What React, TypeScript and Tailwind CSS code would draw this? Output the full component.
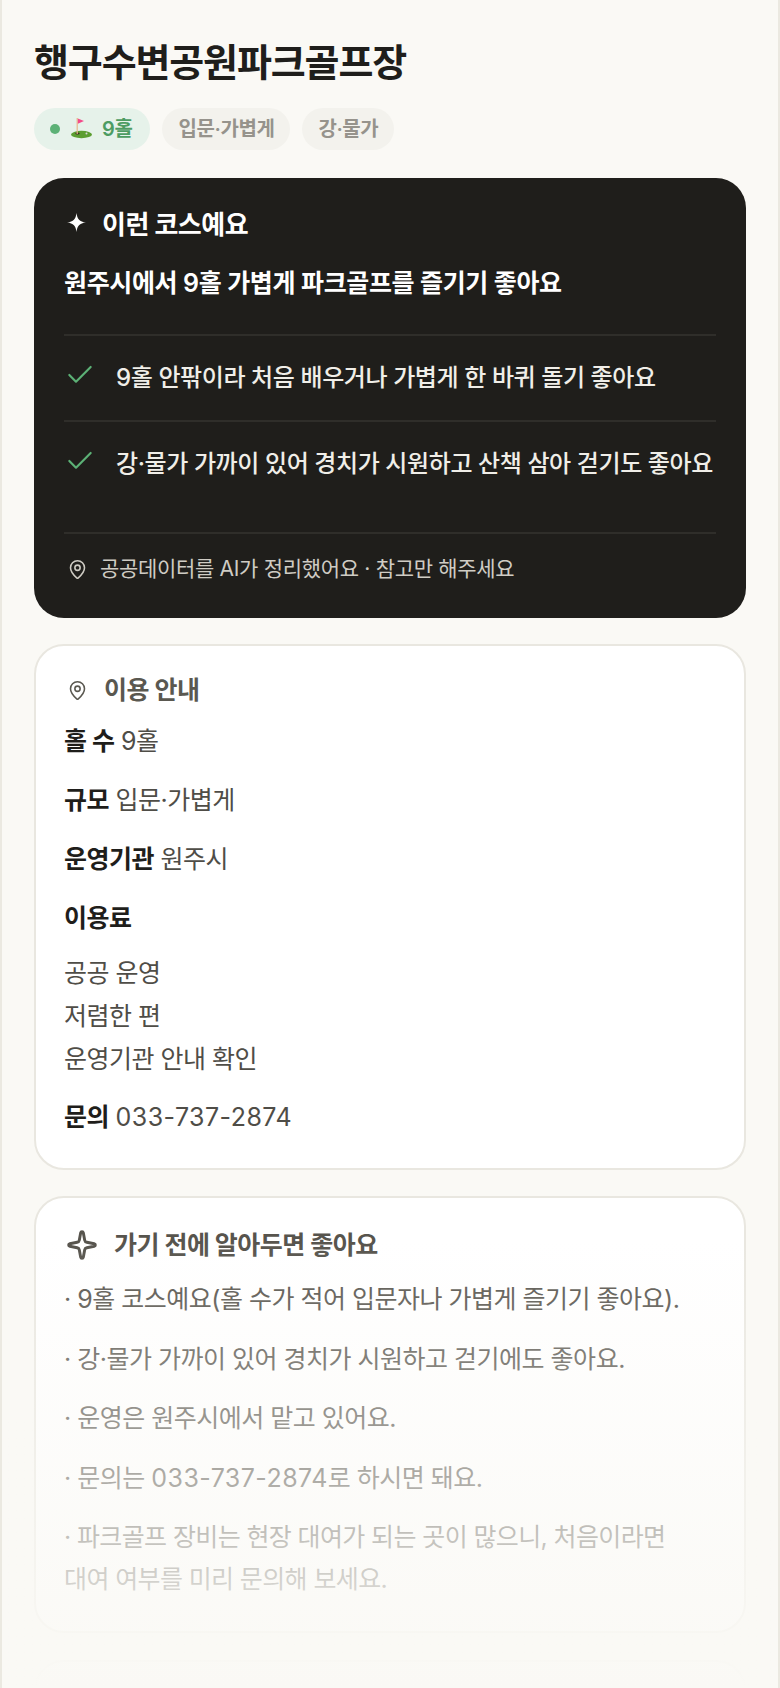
import { Check, MapPin, Sparkle } from "lucide-react";

function FlagEmoji() {
  return (
    <svg viewBox="0 0 22 22" className="w-[22px] h-[22px]">
      <ellipse cx="10.5" cy="16.5" rx="10.5" ry="3.7" fill="#5c9e31" />
      <ellipse cx="6.5" cy="15.5" rx="2.2" ry="1" fill="#3e2723" />
      <circle cx="15.5" cy="15.5" r="1" fill="#d8d8d8" />
      <rect x="5.6" y="0" width="1.2" height="16" fill="#e8b98a" />
      <path d="M6.8 0.5 L13 3 L6.8 5.8 Z" fill="#f44a8a" />
    </svg>
  );
}

function Row({ label, children }: { label: string; children: React.ReactNode }) {
  return (
    <p className="text-[25px] leading-[36px] tracking-[-0.02em] text-[#4f4d47]">
      <span className="font-bold text-[#1f1e1b]">{label}</span> {children}
    </p>
  );
}

function Item({ text, className }: { text: string; className: string }) {
  return (
    <div className={`border-t-2 border-[#2f2e2a] pt-[23px] flex items-start ${className}`}>
      <Check className="w-8 h-8 shrink-0 text-[#5cb176]" strokeWidth={1.6} />
      <p className="ml-5 text-[24px] leading-[37px] font-medium tracking-[-0.4px] whitespace-nowrap text-[#f0eee8]">{text}</p>
    </div>
  );
}

const tip = "text-[25px] leading-[42px] text-[#57544d] break-keep";

const chip = "flex items-center h-[42px] px-4 rounded-full text-[20px] font-semibold tracking-[-0.02em]";

export default function App() {
  return (
    <div className="relative h-[1688px] overflow-hidden bg-[#faf9f5] border-x-2 border-[#ebe9e1] px-8 pt-[37px] font-['Inter','Noto_Sans_CJK_KR',sans-serif]">
      <h1 className="text-[38px] leading-[50px] font-bold tracking-[-0.03em] text-[#1f1e1b]">행구수변공원파크골프장</h1>

      <div className="flex gap-3 mt-[21px]">
        <span className={`${chip} bg-[#e6f2ea] text-[#4d9c62] pr-[18px]`}>
          <span className="w-[10px] h-[10px] rounded-full bg-[#5cb176] mr-[11px]" />
          <FlagEmoji />
          <span className="ml-[9px]">9홀</span>
        </span>
        <span className={`${chip} bg-[#f3f2ed] text-[#96938c]`}>입문·가볍게</span>
        <span className={`${chip} bg-[#f3f2ed] text-[#96938c]`}>강·물가</span>
      </div>

      <section className="mt-7 rounded-[30px] bg-[#1f1e1b] px-[30px] pt-[29px] pb-[33px]">
        <div className="flex items-center text-white">
          <svg viewBox="0 0 16 16" className="w-[19px] h-[19px] ml-[3px] -mt-[6px]" fill="#fff">
            <path d="M8 0 C8.6 5 10.5 7.4 16 8 C10.5 8.6 8.6 11 8 16 C7.4 11 5.5 8.6 0 8 C5.5 7.4 7.4 5 8 0Z" />
          </svg>
          <h2 className="ml-4 text-[26px] leading-[36px] font-bold tracking-[-0.02em]">이런 코스예요</h2>
        </div>
        <p className="mt-[22px] text-[25px] leading-[36px] font-semibold tracking-[-0.015em] text-white">원주시에서 9홀 가볍게 파크골프를 즐기기 좋아요</p>

        <div className="mt-[33px]">
          <Item text="9홀 안팎이라 처음 배우거나 가볍게 한 바퀴 돌기 좋아요" className="pb-6" />
          <Item text="강·물가 가까이 있어 경치가 시원하고 산책 삼아 걷기도 좋아요" className="pb-[50px]" />
        </div>
        <div className="border-t-2 border-[#2f2e2a] pt-[19px] flex items-center text-[#cfccc4]">
          <MapPin className="w-[21px] h-[21px] ml-[3px]" strokeWidth={1.8} />
          <p className="ml-[12px] text-[21px] leading-[32px] tracking-[-0.015em]">공공데이터를 AI가 정리했어요 · 참고만 해주세요</p>
        </div>
      </section>

      <section className="mt-[26px] rounded-[30px] border-2 border-[#e9e7e0] bg-white px-[28px] pt-[26px] pb-[33px]">
        <div className="flex items-center text-[#5a5850]">
          <MapPin className="w-[21px] h-[21px] ml-[3px]" strokeWidth={1.8} />
          <h2 className="ml-[16px] text-[25px] leading-[36px] font-bold tracking-[-0.02em]">이용 안내</h2>
        </div>
        <div className="mt-[15px] flex flex-col gap-[23px]">
          <Row label="홀 수">9홀</Row>
          <Row label="규모">입문·가볍게</Row>
          <Row label="운영기관">원주시</Row>
        </div>
        <p className="mt-[23px] text-[25px] leading-[36px] font-bold tracking-[-0.02em] text-[#1f1e1b]">이용료</p>
        <div className="mt-4 text-[25px] leading-[43px] tracking-[-0.02em] text-[#4f4d47]">
          <p>공공 운영</p>
          <p>저렴한 편</p>
          <p>운영기관 안내 확인</p>
        </div>
        <div className="mt-[18px]">
          <Row label="문의"><span className="tracking-[0.018em]">033-737-2874</span></Row>
        </div>
      </section>

      <section className="mt-[26px] rounded-[30px] border-2 border-[#e9e7e0] bg-white px-[28px] pt-[29px] pb-[31px]">
        <div className="flex items-center text-[#57544d]">
          <Sparkle className="w-8 h-8 ml-[2px]" strokeWidth={2.2} />
          <h2 className="ml-[16px] text-[25px] leading-[36px] font-bold tracking-[-0.02em]">가기 전에 알아두면 좋아요</h2>
        </div>
        <div className="mt-[15px] flex flex-col gap-[17.5px]">
          <p className={`${tip} tracking-[-0.02em]`}>· 9홀 코스예요(홀 수가 적어 입문자나 가볍게 즐기기 좋아요).</p>
          <p className={`${tip} tracking-[-0.02em]`}>· 강·물가 가까이 있어 경치가 시원하고 걷기에도 좋아요.</p>
          <p className={`${tip} tracking-[-0.02em]`}>· 운영은 원주시에서 맡고 있어요.</p>
          <p className={`${tip} tracking-[-0.02em]`}>· 문의는 <span className="tracking-[0.018em]">033-737-2874</span>로 하시면 돼요.</p>
          <p className={`${tip} tracking-[-0.025em]`}>· 파크골프 장비는 현장 대여가 되는 곳이 많으니, 처음이라면<br />대여 여부를 미리 문의해 보세요.</p>
        </div>
      </section>

      <section className="mt-[27px] h-[200px] rounded-[30px] border-2 border-[#e9e7e0] bg-white" />

      <div className="absolute inset-x-0 bottom-0 h-[448px] bg-gradient-to-b from-[#faf9f500] to-[#faf9f5]" />
    </div>
  );
}
